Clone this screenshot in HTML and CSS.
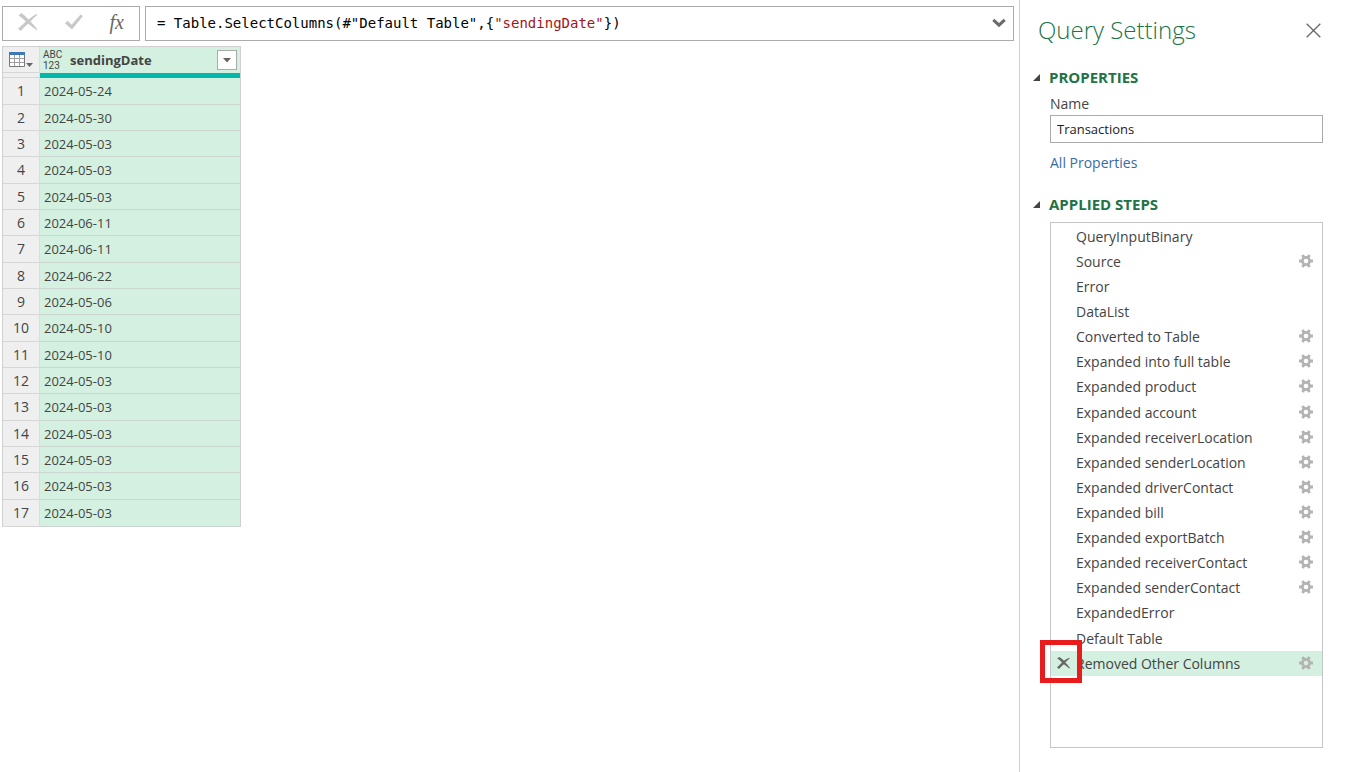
FILE: index.html
```html
<!DOCTYPE html>
<html lang="en">
<head>
<meta charset="utf-8">
<title>Power Query Editor</title>
<link rel="stylesheet" href="styles.css">
</head>
<body>
<svg class="defs" width="0" height="0" aria-hidden="true">
  <symbol id="gear" viewBox="0 0 14 14">
    <g fill="none" stroke="#b3b3b3">
      <circle cx="7" cy="7" r="3.600" stroke-width="2.600"/>
      <path stroke-width="2.900" d="M0 7h3M11 7h3M3.500.940 5 3.540M10.500.940 9 3.540M3.500 13.060 5 10.460M10.500 13.060 9 10.460"/>
    </g>
  </symbol>
</svg>
<div class="editor">
  <main class="preview">
    <div class="formula-row">
      <div class="formula-actions">
        <button class="icon-btn" aria-label="Cancel"><svg width="20" height="18" viewBox="0 0 20 18"><path fill="#c8c8c8" d="M.5 2.500 3.500 0Q7.500 3 10.500 6.500 14.500 3 18.500 1l.8 1Q15.500 4.800 12.500 8.400 16 12 19.500 16.400l-1 .600Q14 14 10.200 10.800 6 14 2.800 18L0 15.800Q4 12 7.800 8.400 4.500 5 .5 2.500z"/></svg></button>
        <button class="icon-btn" aria-label="Accept"><svg width="18" height="16" viewBox="0 0 18 16"><path fill="#c8c8c8" d="M0 9.200 2.600 6.800l4 4L15.500.5 18 2 7 15.500z"/></svg></button>
        <button class="icon-btn fx" aria-label="Insert step">fx</button>
      </div>
      <div class="formula-box">
        <code class="formula">= Table.SelectColumns(#"Default Table",{<span class="string">"sendingDate"</span>})</code>
        <button class="icon-btn" aria-label="Expand formula bar"><svg width="14" height="10" viewBox="0 0 14 10"><path d="M1.300 1.800 7 7.200l5.700-5.400" fill="none" stroke="#6a6a6a" stroke-width="3"/></svg></button>
      </div>
    </div>
    <table class="grid">
      <thead>
        <tr>
          <th class="corner" scope="col"><div class="corner-inner"><button class="table-btn" aria-label="Table menu"><svg width="25" height="18" viewBox="0 0 25 18"><path fill="#fff" stroke="#777" d="M.5 1.500h15v14H.5z"/><path d="M5.500 4v11M10.500 4v11M1 7.500h14M1 11.500h14" stroke="#a0a0a0"/><path fill="#3e78b9" d="M0 1h16v3H0z"/><path fill="#666" d="M17 12h7l-3.500 4z"/></svg></button></div></th>
          <th class="column" scope="col"><div class="column-inner">
            <span class="type"><span>ABC</span><span>123</span></span>
            <span class="column-name">sendingDate</span>
            <button class="filter" aria-label="Filter sendingDate"><svg width="8" height="5" viewBox="0 0 8 5"><path fill="#666" d="M0 0h8L4 4.500z"/></svg></button>
          </div></th>
        </tr>
      </thead>
      <tbody>
        <tr><th scope="row">1</th><td>2024-05-24</td></tr>
        <tr><th scope="row">2</th><td>2024-05-30</td></tr>
        <tr><th scope="row">3</th><td>2024-05-03</td></tr>
        <tr><th scope="row">4</th><td>2024-05-03</td></tr>
        <tr><th scope="row">5</th><td>2024-05-03</td></tr>
        <tr><th scope="row">6</th><td>2024-06-11</td></tr>
        <tr><th scope="row">7</th><td>2024-06-11</td></tr>
        <tr><th scope="row">8</th><td>2024-06-22</td></tr>
        <tr><th scope="row">9</th><td>2024-05-06</td></tr>
        <tr><th scope="row">10</th><td>2024-05-10</td></tr>
        <tr><th scope="row">11</th><td>2024-05-10</td></tr>
        <tr><th scope="row">12</th><td>2024-05-03</td></tr>
        <tr><th scope="row">13</th><td>2024-05-03</td></tr>
        <tr><th scope="row">14</th><td>2024-05-03</td></tr>
        <tr><th scope="row">15</th><td>2024-05-03</td></tr>
        <tr><th scope="row">16</th><td>2024-05-03</td></tr>
        <tr><th scope="row">17</th><td>2024-05-03</td></tr>
      </tbody>
    </table>
  </main>
  <aside class="settings">
    <header class="settings-head">
      <h1>Query Settings</h1>
      <button class="icon-btn" aria-label="Close"><svg width="15" height="15" viewBox="0 0 15 15"><path d="m.7.700 13.600 13.600M14.300.7.700 14.300" stroke="#666" stroke-width="1.300"/></svg></button>
    </header>
    <section class="properties">
      <h2><svg width="7" height="7" viewBox="0 0 7 7"><path fill="#444" d="M7 0v7H0z"/></svg>PROPERTIES</h2>
      <div class="section-body">
        <label for="query-name">Name</label>
        <input id="query-name" type="text" value="Transactions">
        <a href="#">All Properties</a>
      </div>
    </section>
    <section class="applied">
      <h2><svg width="7" height="7" viewBox="0 0 7 7"><path fill="#444" d="M7 0v7H0z"/></svg>APPLIED STEPS</h2>
      <ol class="steps">
        <li>QueryInputBinary</li>
        <li>Source<button class="icon-btn gear" aria-label="Edit Source"><svg width="14" height="14"><use href="#gear"/></svg></button></li>
        <li>Error</li>
        <li>DataList</li>
        <li>Converted to Table<button class="icon-btn gear" aria-label="Edit step"><svg width="14" height="14"><use href="#gear"/></svg></button></li>
        <li>Expanded into full table<button class="icon-btn gear" aria-label="Edit step"><svg width="14" height="14"><use href="#gear"/></svg></button></li>
        <li>Expanded product<button class="icon-btn gear" aria-label="Edit step"><svg width="14" height="14"><use href="#gear"/></svg></button></li>
        <li>Expanded account<button class="icon-btn gear" aria-label="Edit step"><svg width="14" height="14"><use href="#gear"/></svg></button></li>
        <li>Expanded receiverLocation<button class="icon-btn gear" aria-label="Edit step"><svg width="14" height="14"><use href="#gear"/></svg></button></li>
        <li>Expanded senderLocation<button class="icon-btn gear" aria-label="Edit step"><svg width="14" height="14"><use href="#gear"/></svg></button></li>
        <li>Expanded driverContact<button class="icon-btn gear" aria-label="Edit step"><svg width="14" height="14"><use href="#gear"/></svg></button></li>
        <li>Expanded bill<button class="icon-btn gear" aria-label="Edit step"><svg width="14" height="14"><use href="#gear"/></svg></button></li>
        <li>Expanded exportBatch<button class="icon-btn gear" aria-label="Edit step"><svg width="14" height="14"><use href="#gear"/></svg></button></li>
        <li>Expanded receiverContact<button class="icon-btn gear" aria-label="Edit step"><svg width="14" height="14"><use href="#gear"/></svg></button></li>
        <li>Expanded senderContact<button class="icon-btn gear" aria-label="Edit step"><svg width="14" height="14"><use href="#gear"/></svg></button></li>
        <li>ExpandedError</li>
        <li>Default Table</li>
        <li class="selected"><button class="icon-btn delete" aria-label="Delete step"><svg width="13" height="12" viewBox="0 0 13 12"><path fill="#666" d="M.2 1.500 2.300 0Q5 1.500 7 3.700 9.500 1.800 12.300.7l.4.700Q10.500 3 8.400 5.500q2.500 2.500 4.600 5.400l-.8.500Q9.500 9 6.900 7.200 4.500 9 2 12L0 10.500Q2.500 8 5 5.500 3 3.200.2 1.500z"/></svg></button>Removed Other Columns<button class="icon-btn gear" aria-label="Edit step"><svg width="14" height="14"><use href="#gear"/></svg></button><span class="callout"></span></li>
      </ol>
    </section>
  </aside>
</div>
</body>
</html>
```
FILE: styles.css
```css
* { box-sizing: border-box; }
body {
  margin: 0;
  background: #fff;
  color: #444;
  font: 14px/20px "Open Sans", "Noto Sans", sans-serif;
}
button, input { font: inherit; color: inherit; }
svg { display: block; flex: none; }
.defs { position: absolute; }
.editor { display: flex; min-height: 100vh; }
.preview { flex: 1; min-width: 0; padding: 6px 5px 0 2px; }
.icon-btn {
  display: inline-flex;
  align-items: center;
  justify-content: center;
  padding: 0;
  border: 0;
  background: none;
}

.formula-row { display: flex; gap: 5px; height: 35px; margin-bottom: 5px; }
.formula-actions {
  display: flex;
  align-items: center;
  justify-content: space-between;
  width: 138px;
  padding: 0 15px 3px;
  border: 1px solid #ababab;
}
.formula-actions .fx { font: italic 20px/20px "Liberation Serif", serif; color: #666; }
.formula-box {
  display: flex;
  flex: 1;
  align-items: center;
  justify-content: space-between;
  padding: 0 7px 1px 11px;
  border: 1px solid #ababab;
}
.formula { font: 14px/20px "DejaVu Sans Mono", monospace; color: #000; }
.string { color: #a31515; }

.grid {
  width: 239px;
  border: 1px solid #d0d0d0;
  border-width: 1px 1px 0;
  border-spacing: 0;
  table-layout: fixed;
}
.grid th, .grid td { padding: 0; }
.grid thead th { height: 31px; text-align: left; }
.corner {
  width: 37px;
  background: #efefef;
  border-right: 1px solid #dcdcdc;
  border-bottom: 1px solid #d6d6d6;
  vertical-align: top;
}
.corner-inner { height: 26px; padding: 4px 0 0 6px; border-bottom: 1px solid #d6d6d6; }
.table-btn { padding: 0; border: 0; background: none; }
.column { background: #d3f0e0; border-bottom: 5px solid #01b8aa; }
.column-inner { display: flex; align-items: center; height: 26px; padding: 0 3px; }
.type {
  display: flex;
  flex-direction: column;
  width: 27px;
  font: 10px/11px Roboto, sans-serif;
}
.column-name { flex: 1; font-size: 13px; }
.filter {
  display: flex;
  align-items: center;
  justify-content: center;
  width: 20px;
  height: 20px;
  padding: 0;
  border: 1px solid #ababab;
  background: #fff;
}
.grid tbody tr { height: 26px; }
.grid tbody tr:nth-child(3n+1), .grid tbody tr:last-child { height: 27px; }
tbody th {
  background: #efefef;
  border-right: 1px solid #dcdcdc;
  border-bottom: 1px solid #d6d6d6;
  font-weight: 400;
}
tbody td {
  background: #d3f0e0;
  border-bottom: 1px solid #ccd6d0;
  font-size: 13px;
}
.grid tbody td { padding-left: 4px; }

.settings { width: 329px; padding: 11px 25px 24px 13px; border-left: 1px solid #d0d0d0; }
.settings-head {
  display: flex;
  align-items: center;
  justify-content: space-between;
  height: 38px;
  padding: 0 2px 0 5px;
  margin-bottom: 18px;
}
h1 { margin: 0; font-size: 24px; line-height: 36px; font-weight: 300; color: #217346; }
h2 { display: flex; align-items: center; gap: 9px; margin: 0; font-size: 15px; line-height: 20px; font-weight: 700; color: #217346; }
.section-body { display: flex; flex-direction: column; align-items: flex-start; padding-left: 17px; margin: 7px 0 21px; }
.section-body input { width: 100%; height: 28px; margin: 1px 0 10px; padding: 0 6px; border: 1px solid #ababab; color: #222; font-size: 13px; }
.section-body a { color: #386ba5; text-decoration: none; }
.steps { min-height: 526px; margin: 8px 0 0 17px; padding: 1px 0; border: 1px solid #c6c6c6; list-style: none; }
.steps li { position: relative; display: flex; align-items: center; height: 25px; padding: 0 9px 0 25px; }
.steps li:nth-child(9n+7) { margin-bottom: 1px; }
.gear { margin-left: auto; }
.steps .icon-btn { padding-bottom: 2px; }
.steps .selected { padding-left: 6px; background: #d3f0e0; }
.delete { width: 13px; margin-right: 6px; }
.callout { position: absolute; left: -11px; top: -11px; width: 42px; height: 43px; border: 5px solid #e81c1c; pointer-events: none; }
```
